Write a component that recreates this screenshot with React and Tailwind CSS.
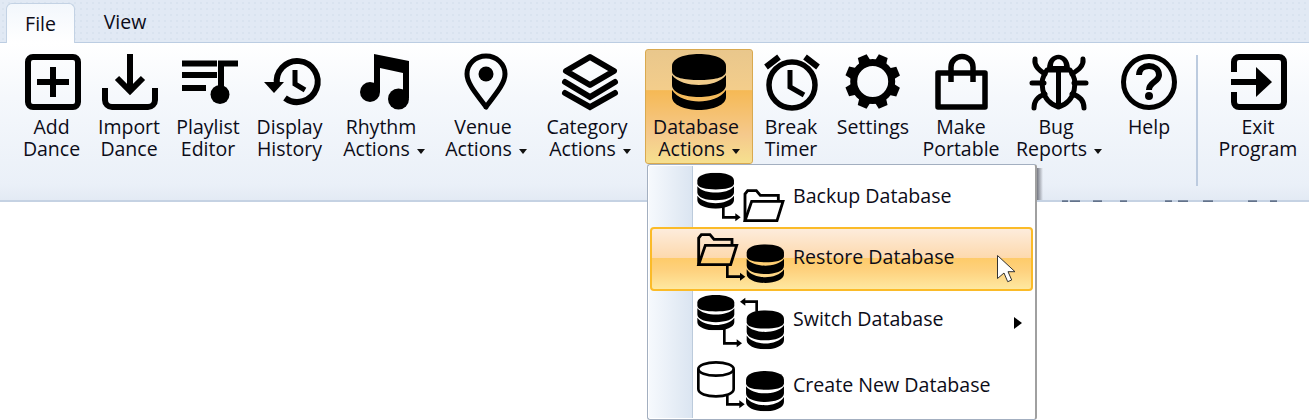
import React from "react";

const Ico = ({ children }) => (
  <svg width="56" height="56" viewBox="0 0 56 56" className="block shrink-0 overflow-visible" fill="none" stroke="#000" strokeWidth="6">
    {children}
  </svg>
);

const DbShape = ({ fill = "#000" }) => (
  <g fill={fill} stroke="none">
    <path d="M1 12 C1 4 14 0 28 0 S55 4 55 12 V17 C55 24 42 26 28 26 S1 24 1 17 Z" />
    <path d="M1 21 C6 28 18 31 28 31 S50 28 55 21 V31 C55 39 42 43 28 43 S1 39 1 31 Z" />
    <path d="M1 36 C6 44 18 47.5 28 47.5 S50 44 55 36 V43 C55 51 42 56 28 56 S1 51 1 43 Z" />
  </g>
);

const Db = ({ x, y, w, h }) => (
  <svg x={x} y={y} width={w} height={h} viewBox="0 0 56 56" preserveAspectRatio="none">
    <DbShape />
  </svg>
);

const Folder = ({ x, y }) => (
  <g transform={`translate(${x} ${y})`} fill="none" stroke="#000" strokeWidth="8.5" strokeLinejoin="miter">
    <path d="M4 94 V14 L12 4 H38 L50 18 H104 V34" />
    <path d="M24 36 H118 L100 94 H4 Z" />
  </g>
);

const Conn = ({ d, tip }) => (
  <g>
    <path d={d} fill="none" stroke="#000" strokeWidth="8" />
    <path d={tip} fill="#000" />
  </g>
);

const Gear = () => (
  <svg width="56" height="56" viewBox="0 0 56 56" className="block shrink-0">
    <circle cx="27.7" cy="27.5" r="19" fill="none" stroke="#000" strokeWidth="7" />
    {[0, 45, 90, 135, 180, 225, 270, 315].map((a) => (
      <path key={a} d="M23 0 H32.5 L34 9 H21.5 Z" fill="#000" transform={`rotate(${a + 22.5} 27.7 27.5)`} />
    ))}
  </svg>
);

const icons = {
  add: (
    <Ico>
      <rect x="3" y="3" width="50" height="50" rx="5" />
      <path d="M28 13 V43 M12 28 H44" />
    </Ico>
  ),
  import: (
    <Ico>
      <path d="M28 0 V37 M15 24 L28 37 L41 24" />
      <path d="M3 34 V46 A7 7 0 0 0 10 53 H46 A7 7 0 0 0 53 46 V34" />
    </Ico>
  ),
  playlist: (
    <Ico>
      <path d="M0 9.5 H35 M0 21 H35 M0 34 H24" />
      <path d="M39 40 V9.5 H56" />
      <circle cx="38" cy="40.5" r="9.5" fill="#000" stroke="none" />
    </Ico>
  ),
  history: (
    <Ico>
      <path d="M13 31 A20.5 20.5 0 1 1 21 44" />
      <path d="M0 28 H20 L10 39 Z" fill="#000" stroke="none" />
      <path d="M31 16 V30 L41 36" strokeWidth="5" />
    </Ico>
  ),
  rhythm: (
    <Ico>
      <g fill="#000" stroke="none">
        <path d="M18 0 L53 7 V44 H47 V19 L24 14 V38 H18 Z" />
        <circle cx="14" cy="38" r="10" />
        <circle cx="42.5" cy="45" r="10.5" />
      </g>
    </Ico>
  ),
  venue: (
    <Ico>
      <path d="M28 53 C22 44 9 31 9 20 A19 18 0 0 1 47 20 C47 31 34 44 28 53 Z" strokeWidth="5" strokeLinejoin="round" />
      <circle cx="28" cy="20" r="7.5" fill="#000" stroke="none" />
    </Ico>
  ),
  category: (
    <Ico>
      <path d="M28 3 L52 17 L28 31 L4 17 Z" strokeLinejoin="round" />
      <path d="M3 28 L28 43 L53 28 M3 39 L28 53 L53 39" strokeLinecap="round" />
    </Ico>
  ),
  database: (
    <svg width="56" height="56" viewBox="0 0 56 56" className="block shrink-0">
      <DbShape />
    </svg>
  ),
  timer: (
    <Ico>
      <circle cx="27" cy="31" r="23" strokeWidth="5.5" />
      <path d="M1 13 L14 3 M53 13 L40 3" strokeWidth="6" />
      <path d="M25 16 V33 L39 41" strokeWidth="5" />
    </Ico>
  ),
  settings: <Gear />,
  portable: (
    <Ico>
      <path d="M6 19 H51 V53 H4 V19 Z" strokeLinejoin="round" strokeWidth="5.5" />
      <path d="M17 28 V13 A11 10.5 0 0 1 39 13 V28" strokeWidth="5.5" />
    </Ico>
  ),
  bug: (
    <Ico>
      <path fillRule="evenodd" d="M16 15 C16 -4 39 -4 39 15 Z M22 12 H33 C33 3 22 3 22 12 Z" fill="#000" stroke="none" />
      <path d="M27.5 16 V53 M16 16 H39 C47 26 46 47 27.5 53 C9 47 8 26 16 16 Z" strokeWidth="5" strokeLinejoin="round" />
      <path d="M4 5 C3 12 8 16 14 20 M52 5 C53 12 47 16 41 20 M1 29 H13 M55 29 H43 M3 54 C3 46 8 42 14 40 M53 54 C53 46 48 42 41 40" strokeWidth="5" strokeLinecap="round" />
    </Ico>
  ),
  help: (
    <Ico>
      <circle cx="28" cy="28" r="25.5" strokeWidth="5" />
      <path d="M18 21 C18 9 38 9 38 21 C38 28 28 28 28 36" strokeWidth="6" />
      <circle cx="28" cy="42" r="4" fill="#000" stroke="none" />
    </Ico>
  ),
  exit: (
    <Ico>
      <path d="M3 18 V8 A5 5 0 0 1 8 3 H48 A5 5 0 0 1 53 8 V48 A5 5 0 0 1 48 53 H8 A5 5 0 0 1 3 48 V38" />
      <path d="M0 28 H26" />
      <path d="M25 13 L41 28 L25 43 Z" fill="#000" stroke="none" />
    </Ico>
  ),
};

const Caret = () => (
  <svg width="8" height="5" viewBox="0 0 8 5" className="inline-block ml-[7px] align-[2px]">
    <path d="M0 0 H8 L4 5 Z" fill="#111" />
  </svg>
);

const buttons = [
  { w: "w-[77px]", icon: "add", a: "Add", b: "Dance", dx: "translate-x-[1px]" },
  { w: "w-[78px]", icon: "import", a: "Import", b: "Dance", dx: "translate-x-[1px]" },
  { w: "w-[80px]", icon: "playlist", a: "Playlist", b: "Editor", dx: "translate-x-[2px]" },
  { w: "w-[83px]", icon: "history", a: "Display", b: "History", dx: "translate-x-[2px]" },
  { w: "w-[106px]", icon: "rhythm", a: "Rhythm", b: "Actions", caret: true },
  { w: "w-[98px]", icon: "venue", a: "Venue", b: "Actions", caret: true },
  { w: "w-[110px]", icon: "category", a: "Category", b: "Actions", caret: true },
  { w: "w-[108px]", icon: "database", a: "Database", b: "Actions", caret: true, active: true },
  { w: "w-[76px]", icon: "timer", a: "Break", b: "Timer", dx: "translate-x-[2px]" },
  { w: "w-[88px]", icon: "settings", a: "Settings" },
  { w: "w-[88px]", icon: "portable", a: "Make", b: "Portable", dx: "translate-x-[1px]" },
  { w: "w-[108px]", icon: "bug", a: "Bug", b: "Reports", caret: true },
  { w: "w-[72px]", icon: "help", a: "Help" },
];

const RibbonButton = ({ w, icon, a, b, caret, active, dx = "" }) => (
  <div
    className={`${w} h-[115px] shrink-0 flex flex-col items-center pt-[4px] border rounded-[3px] ${
      active
        ? "border-[#d9a94f] bg-[linear-gradient(180deg,#e9c78c_0%,#f3cd8b_35%,#f5b955_36%,#f5c98c_75%,#f6e08f_100%)]"
        : "border-transparent"
    }`}
  >
    <div className={dx}>{icons[icon]}</div>
    <div className="mt-[6px] text-center leading-[22px] whitespace-nowrap">
      <div className={caret ? "mr-[6px]" : ""}>{a}</div>
      {b && (
        <div>
          {b}
          {caret && <Caret />}
        </div>
      )}
    </div>
  </div>
);

const MenuRow = ({ h, vb, label, hot, shift, children, sub }) => (
  <div
    className={`${h} flex items-center relative ${
      hot
        ? "mx-[2px] rounded-[4px] border-2 border-[#fbbb28] bg-[linear-gradient(180deg,#fdecdc_0%,#fdd9ad_48%,#fecb6a_49%,#fed27f_70%,#fee8a0_100%)]"
        : ""
    }`}
  >
    <div className={hot ? "w-[43px] shrink-0" : "w-[47px] shrink-0"} />
    <svg width="92" viewBox={vb} className="block shrink-0 h-full">
      {children}
    </svg>
    <div className={`ml-[6px] text-[19.6px] leading-[24px] whitespace-nowrap ${shift}`}>{label}</div>
    {sub && (
      <svg width="8" height="12" viewBox="0 0 8 12" className="absolute right-[13px] top-[26px]">
        <path d="M0 0 L8 6 L0 12 Z" fill="#000" />
      </svg>
    )}
  </div>
);

const fragments = [
  [1062, 6], [1070, 10], [1093, 9], [1120, 7], [1165, 7], [1178, 10], [1203, 10], [1248, 9], [1270, 7],
];

export default function App() {
  return (
    <div
      className="relative w-full h-[420px] bg-white overflow-hidden text-[19.5px] text-[#0c0c18]"
      style={{ fontFamily: '"Open Sans", "Noto Sans", sans-serif' }}
    >
      {/* tab strip */}
      <div className="h-[42px] flex items-end pl-[6px] bg-[#e1e9f4] bg-[radial-gradient(#d9e3ef_1px,transparent_1px)] bg-[length:6px_6px]">
        <div className="w-[69px] h-[40px] relative top-[1px] z-10 flex items-center justify-center rounded-t-[6px] border border-b-0 border-[#c3d2e4] bg-[linear-gradient(180deg,#f3f7fc_0%,#ffffff_100%)]">
          File
        </div>
        <div className="w-[100px] h-[40px] flex items-center justify-center">View</div>
      </div>

      {/* ribbon */}
      <div className="h-[160px] flex items-start pl-[13px] pt-[6px] border-t border-b-2 border-t-[#bccde2] border-b-[#c5d2e3] bg-[linear-gradient(180deg,#ffffff_0%,#f5f8fc_35%,#eaf0f8_90%,#e3eaf4_100%)]">
        {buttons.map((b) => (
          <RibbonButton key={b.a} {...b} />
        ))}
        <div className="w-[2px] h-[131px] mt-[6px] ml-[11px] shrink-0 bg-[#bccbdf]" />
        <div className="ml-[12px]">
          <RibbonButton w="w-[96px]" icon="exit" a="Exit" b="Program" dx="translate-x-[1px]" />
        </div>
      </div>

      {/* text of the page behind, cut off under the ribbon edge */}
      <svg width="1309" height="2" className="absolute left-0 top-[200px]">
        {fragments.map(([x, w]) => (
          <rect key={x} x={x} y="0.5" width={w} height="1.2" fill="#3a4a66" />
        ))}
      </svg>

      {/* shadow of the menu over the ribbon */}
      <div className="absolute left-[1037px] top-[168px] w-[6px] h-[32px] bg-[linear-gradient(90deg,rgba(40,40,50,0.6),rgba(40,40,50,0))]" />

      {/* database actions menu */}
      <div className="absolute left-[647px] top-[164px] w-[390px] h-[256px] z-20 bg-white border border-[#a3afc0] border-r-2 border-r-[#a0a0a0] rounded-[3px] py-px">
        <div className="absolute left-px top-px bottom-px w-[44px] border-r border-[#bccbdc] bg-[linear-gradient(90deg,#f6f9fd_0%,#dbe5f1_100%)]" />
        <MenuRow h="h-[61px]" vb="165 18 276 183" label="Backup Database" shift="mb-[1px]">
          <Db x={170} y={38} w={114} h={108} />
          <Conn d="M250 140 V172 H290" tip="M286 160 L302 172 L286 184 Z" />
          <Folder x={311} y={88} />
        </MenuRow>
        <MenuRow h="h-[64px]" vb="165 207 276 180" label="Restore Database" hot shift="mb-[5px]">
          <Folder x={172} y={220} />
          <Conn d="M262 316 V350 H305" tip="M300 338 L316 350 L300 362 Z" />
          <Db x={318} y={253} w={116} h={116} />
        </MenuRow>
        <MenuRow h="h-[64px]" vb="165 18 276 192" label="Switch Database" shift="mb-[8px]" sub>
          <Db x={170} y={30} w={115} h={106} />
          <Db x={318} y={76} w={116} h={117} />
          <Conn d="M350 80 V50 H312" tip="M316 38 L300 50 L316 62 Z" />
          <Conn d="M253 132 V175 H295" tip="M290 163 L306 175 L290 187 Z" />
        </MenuRow>
        <MenuRow h="h-[64px]" vb="165 210 276 192" label="Create New Database" shift="mb-[5px]">
          <g fill="none" stroke="#000" strokeWidth="8">
            <ellipse cx="228" cy="252" rx="53" ry="20" />
            <path d="M175 252 V312 C175 326 200 334 228 334 S281 326 281 312 V252" />
          </g>
          <Conn d="M262 332 V358 H303" tip="M298 346 L314 358 L298 370 Z" />
          <Db x={316} y={258} w={118} h={121} />
        </MenuRow>
      </div>

      {/* mouse pointer */}
      <svg width="20" height="30" viewBox="0 0 20 30" className="absolute left-[996px] top-[254px] z-30">
        <path d="M1.5 1.5 V24.5 L8 19 L11.7 27.7 L15.7 26 L12 17.7 L19 17.7 Z" fill="#fff" stroke="#333" strokeWidth="1" />
      </svg>
    </div>
  );
}
